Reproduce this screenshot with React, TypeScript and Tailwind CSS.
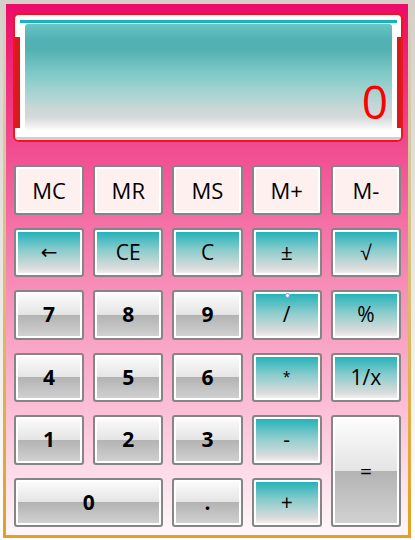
import React from 'react';

// ============================================================================
// Types / data
// ============================================================================

type KeyKind = 'mem' | 'op' | 'num';

type CalcKey = {
  label: string;
  kind: KeyKind;
  span?: string;
  text?: string;
};

const keys: CalcKey[] = [
  { label: 'MC', kind: 'mem' },
  { label: 'MR', kind: 'mem' },
  { label: 'MS', kind: 'mem' },
  { label: 'M+', kind: 'mem' },
  { label: 'M-', kind: 'mem' },

  { label: '←', kind: 'op', text: "text-[20px] font-normal font-['DejaVu_Sans',sans-serif]" },
  { label: 'CE', kind: 'op' },
  { label: 'C', kind: 'op' },
  { label: '±', kind: 'op' },
  { label: '√', kind: 'op', text: "text-[21px] font-normal font-['Liberation_Sans',sans-serif]" },

  { label: '7', kind: 'num' },
  { label: '8', kind: 'num' },
  { label: '9', kind: 'num' },
  { label: '/', kind: 'op' },
  { label: '%', kind: 'op' },

  { label: '4', kind: 'num' },
  { label: '5', kind: 'num' },
  { label: '6', kind: 'num' },
  { label: '*', kind: 'op', text: 'text-[14px] font-normal' },
  { label: '1/x', kind: 'op' },

  { label: '1', kind: 'num' },
  { label: '2', kind: 'num' },
  { label: '3', kind: 'num' },
  { label: '-', kind: 'op' },
  { label: '=', kind: 'num', span: 'row-span-2', text: 'text-[21px] font-normal' },

  { label: '0', kind: 'num', span: 'col-span-2' },
  { label: '.', kind: 'num' },
  { label: '+', kind: 'op' },
];

const kindBg: Record<KeyKind, string> = {
  mem: 'bg-[#fff0f0]',
  op: 'bg-[linear-gradient(to_bottom,#1ab0b8,#8ccccc_45%,#dcdcdc_85%,#f7f7f7)]',
  num: 'bg-[linear-gradient(to_bottom,#fdfdfd,#e4e4e4_50%,#b3b3b3_50%,#d3d3d3)]',
};

const kindText: Record<KeyKind, string> = {
  mem: 'text-[22px] font-normal',
  op: 'text-[21px] font-normal',
  num: 'text-[21px] font-bold',
};

// ============================================================================
// Components
// ============================================================================

function Key({ k }: { k: CalcKey }) {
  return (
    <button
      className={`relative flex items-center justify-center rounded-[3px] border-2 border-[#858585] shadow-[inset_0_0_0_2px_#ffffff] text-black leading-none ${kindBg[k.kind]} ${k.text ?? kindText[k.kind]} ${k.span ?? ''}`}
    >
      {k.label}
      {k.label === '/' && (
        <span className="absolute top-[1px] left-[31px] w-[5px] h-[5px] rounded-full bg-white border border-[#7a9cf0]" />
      )}
    </button>
  );
}

function Display() {
  return (
    <div className="ml-[7px] mt-[9px] w-[390px] h-[129px] rounded-[6px] border-2 border-[#f0141e] bg-[linear-gradient(to_bottom,#ffffff_0px,#ffffff_22px,#d41c1c_22px,#d41c1c_113px,#ffffff_113px)] flex flex-col overflow-hidden">
      <div className="px-[5px] pt-[5px] pr-[4px] flex-1 flex">
        <div className="flex-1 flex flex-col bg-white border-t-[3px] border-[#18b4be] px-[5px] pt-[1px] pb-[7px]">
          <div className="flex-1 rounded-[3px] bg-[linear-gradient(to_bottom,#6ac6c6,#52b1b2_14%,#53b1b2_24%,#7cc8c6_45%,#a6d4d2_65%,#cbd7d7_80%,#d4d9d9_88%,#ececec_95%,#fdfdfd)] flex items-end justify-end pr-[4px] pb-[6px]">
            <span className="text-[46px] leading-none text-[#ff0000]">0</span>
          </div>
        </div>
      </div>
      <div className="h-[3px] bg-[#cfcfcf]" />
    </div>
  );
}

export default function App() {
  return (
    <div className="w-[415px] h-[540px] bg-[linear-gradient(to_bottom,#d4d0c8,#ffffff)] pl-[3px] font-['Open_Sans','Noto_Sans',sans-serif]">
      <div className="w-[408px] h-[538px] bg-[linear-gradient(to_bottom,#d4d0c8,#d8c488_40%,#e3a11e)] pt-[4px] px-[3px] pb-[3px]">
        <div className="h-full flex flex-col bg-[linear-gradient(to_bottom,#ec0b68,#f25394_30%,#f68bb6_52%,#fbbcd4_75%,#fff8fb)]">
          <Display />

          {/* Keypad */}
          <div className="mt-[23px] ml-[8px] w-[387px] h-[362px] grid grid-cols-5 grid-rows-6 gap-x-[9px] gap-y-[13px]">
            {keys.map((k) => (
              <Key key={k.label} k={k} />
            ))}
          </div>
        </div>
      </div>
    </div>
  );
}
